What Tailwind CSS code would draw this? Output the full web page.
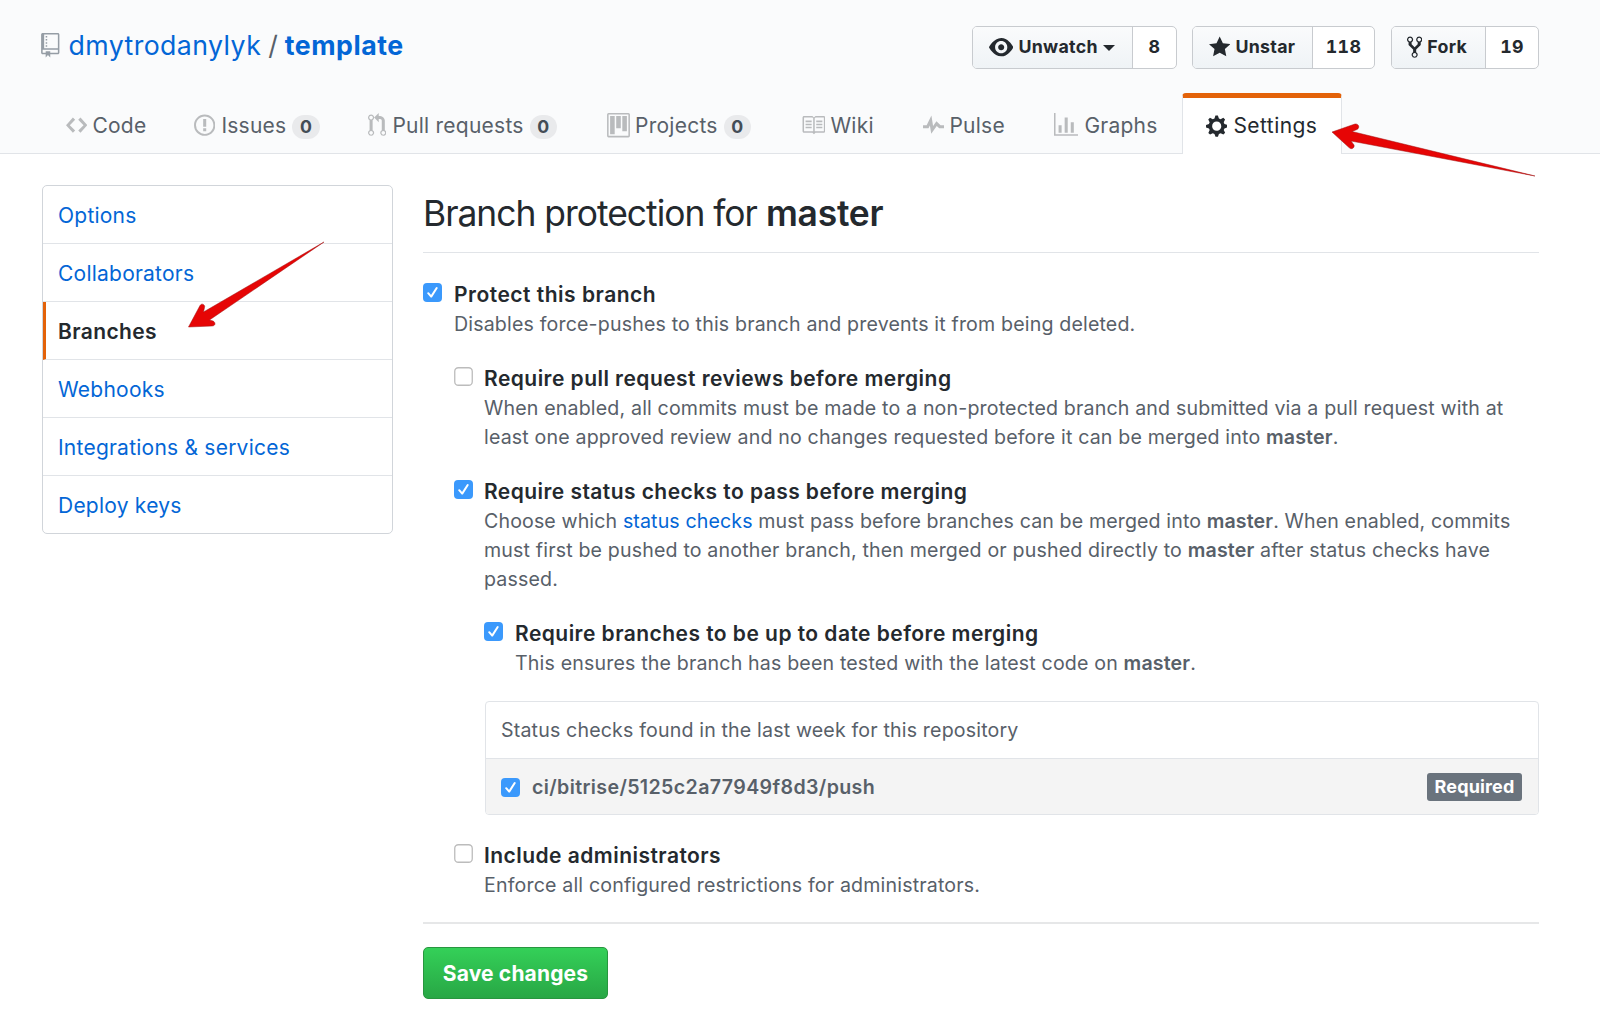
<!DOCTYPE html>
<html lang="en">
<head>
<meta charset="utf-8">
<title>Branch protection</title>
<script src="https://cdn.jsdelivr.net/npm/@tailwindcss/browser@4"></script>
</head>
<body class="relative h-[1029px] w-[1600px] overflow-hidden bg-white font-[Inter,sans-serif] text-[#24292e]">
<svg class="hidden">
  <symbol id="on" viewBox="0 0 19 19"><rect width="19" height="19" rx="4" fill="#3b99fc"/><path d="M5.2 10.2 8.2 13.6 13.7 5" fill="none" stroke="#fff" stroke-width="2" stroke-linecap="round" stroke-linejoin="round"/></symbol>
  <symbol id="off" viewBox="0 0 19 19"><rect x=".75" y=".75" width="17.5" height="17.5" rx="3.6" fill="#fff" stroke="#bcbcbc" stroke-width="1.3"/></symbol>
</svg>

<header class="flex h-[154px] flex-col border-b border-[#e1e4e8] bg-[#fafbfc]">
  <div class="flex h-[93px] shrink-0 items-start pr-[61px] pl-[41px]">
    <div class="mt-[25px] flex h-10 items-center text-[26.7px] leading-10 whitespace-nowrap text-[#0366d6]">
      <svg class="mt-px mr-[9px] h-[24.4px] w-[18.5px] fill-[#959da5]" viewBox="0 0 12 16"><path d="M4 9H3V8h1v1zm0-3H3v1h1V6zm0-2H3v1h1V4zm0-2H3v1h1V2zm8-1v12c0 .55-.45 1-1 1H6v2l-1.5-1.5L3 16v-2H1c-.55 0-1-.45-1-1V1c0-.55.45-1 1-1h10c.55 0 1 .45 1 1zm-1 10H1v2h2v-1h3v1h5v-2zm0-10H2v9h9V1z"/></svg>
      <span class="tracking-[0.42px]">dmytrodanylyk</span>
      <span class="mx-[7px] text-[#586069]">/</span>
      <span class="font-bold tracking-[0.5px]">template</span>
    </div>
    <div class="mt-[26px] ml-auto flex gap-4 text-[17.8px] font-bold tracking-[0.3px] tabular-nums">
      <div class="-mr-px flex h-[43px] w-[205px] overflow-hidden rounded-[5px] border border-[#c8cbcf] bg-white">
        <div class="flex w-[160px] items-center border-r border-[#c8cbcf] bg-linear-to-b from-[#fafbfc] to-[#eff3f6] pl-4">
          <svg class="mr-[5px] h-[24.4px] w-[24.4px] fill-[#24292e]" viewBox="0 0 16 16"><path d="M8.06 2C3 2 0 8 0 8s3 6 8.06 6C13 14 16 8 16 8s-3-6-7.94-6zM8 12c-2.2 0-4-1.78-4-4 0-2.2 1.8-4 4-4 2.22 0 4 1.8 4 4 0 2.22-1.78 4-4 4zm2-4c0 1.11-.89 2-2 2-1.11 0-2-.89-2-2 0-1.11.89-2 2-2 1.11 0 2 .89 2 2z"/></svg>
          <span>Unwatch</span>
          <span class="ml-[5px] border-x-[6px] border-t-[6px] border-x-transparent border-t-[#24292e]"></span>
        </div>
        <div class="flex flex-1 items-center justify-center">8</div>
      </div>
      <div class="flex h-[43px] w-[183px] overflow-hidden rounded-[5px] border border-[#c8cbcf] bg-white">
        <div class="flex w-[120px] items-center border-r border-[#c8cbcf] bg-linear-to-b from-[#fafbfc] to-[#eff3f6] pl-4">
          <svg class="mr-[5px] h-[24.4px] w-[21.4px] fill-[#24292e]" viewBox="0 0 14 16"><path d="M14 6l-4.9-.64L7 1 4.9 5.36 0 6l3.6 3.26L2.67 14 7 11.67 11.33 14l-.93-4.74z"/></svg>
          <span>Unstar</span>
        </div>
        <div class="flex flex-1 items-center justify-center">118</div>
      </div>
      <div class="flex h-[43px] w-[148px] overflow-hidden rounded-[5px] border border-[#c8cbcf] bg-white">
        <div class="flex w-[94px] items-center border-r border-[#c8cbcf] bg-linear-to-b from-[#fafbfc] to-[#eff3f6] pl-[15px]">
          <svg class="mr-[5px] h-[24.4px] w-[15.3px] fill-[#24292e]" viewBox="0 0 10 16"><path d="M8 1a1.993 1.993 0 0 0-1 3.72V6L5 8 3 6V4.72A1.993 1.993 0 0 0 2 1a1.993 1.993 0 0 0-1 3.72V6.5l3 3v1.78A1.993 1.993 0 0 0 5 15a1.993 1.993 0 0 0 1-3.72V9.5l3-3V4.72A1.993 1.993 0 0 0 8 1zM2 4.2C1.34 4.2.8 3.65.8 3c0-.65.55-1.2 1.2-1.2.65 0 1.2.55 1.2 1.2 0 .65-.55 1.2-1.2 1.2zm3 10c-.66 0-1.2-.55-1.2-1.2 0-.65.55-1.2 1.2-1.2.65 0 1.2.55 1.2 1.2 0 .65-.55 1.2-1.2 1.2zm3-10c-.66 0-1.2-.55-1.2-1.2 0-.65.55-1.2 1.2-1.2.65 0 1.2.55 1.2 1.2 0 .65-.55 1.2-1.2 1.2z"/></svg>
          <span>Fork</span>
        </div>
        <div class="flex flex-1 items-center justify-center">19</div>
      </div>
    </div>
  </div>

  <nav class="-mb-px flex h-[61px] shrink-0 pl-[66px] text-[21px] tracking-[0.25px] whitespace-nowrap text-[#586069]">
    <a class="flex w-[128px] items-center pt-1"><svg class="mr-[5px] h-[24.4px] w-[21.4px] fill-[#b9bbbd]" viewBox="0 0 14 16"><path d="M9.5 3L8 4.5 11.5 8 8 11.5 9.5 13 14 8 9.5 3zm-5 0L0 8l4.5 5L6 11.5 2.5 8 6 4.5 4.500 3z"/></svg><span>Code</span></a>
    <a class="flex w-[174px] items-center pt-1"><svg class="mr-[6px] h-[24.4px] w-[21.4px] fill-[#b9bbbd]" viewBox="0 0 14 16"><path d="M7 2.3c3.14 0 5.7 2.56 5.7 5.7s-2.56 5.7-5.7 5.7A5.71 5.71 0 0 1 1.3 8c0-3.14 2.56-5.7 5.7-5.7zM7 1C3.14 1 0 4.14 0 8s3.14 7 7 7 7-3.14 7-7-3.14-7-7-7zm1 3H6v5h2V4zm0 6H6v2h2v-2z"/></svg><span>Issues</span><span class="mt-[3px] ml-[6px] flex h-6 w-[27.5px] items-center justify-center rounded-full bg-[#e9eaec] text-[17.7px] font-bold text-[#444d56]">0</span></a>
    <a class="flex w-[239px] items-center pt-1"><svg class="mr-[6px] h-[24.4px] w-[18.4px] fill-[#b9bbbd]" viewBox="0 0 12 16"><path d="M11 11.28V5c-.03-.78-.34-1.47-.94-2.06C9.46 2.35 8.78 2.03 8 2H7V0L4 3l3 3V4h1c.27.02.48.11.69.31.21.2.3.42.31.69v6.28A1.993 1.993 0 0 0 10 15a1.993 1.993 0 0 0 1-3.72zm-1 2.92c-.66 0-1.2-.55-1.2-1.2 0-.65.55-1.2 1.2-1.2.65 0 1.2.55 1.2 1.2 0 .65-.55 1.2-1.2 1.2zM4 3c0-1.11-.89-2-2-2a1.993 1.993 0 0 0-1 3.72v6.56A1.993 1.993 0 0 0 2 15a1.993 1.993 0 0 0 1-3.72V4.72c.59-.34 1-.98 1-1.72zm-.8 10c0 .66-.55 1.2-1.2 1.2-.65 0-1.2-.55-1.2-1.2 0-.65.55-1.2 1.2-1.2.65 0 1.2.55 1.2 1.2zM2 4.2C1.34 4.2.8 3.65.8 3c0-.65.55-1.2 1.2-1.2.65 0 1.2.55 1.2 1.2 0 .65-.55 1.2-1.2 1.2z"/></svg><span>Pull requests</span><span class="mt-[3px] ml-[6px] flex h-6 w-[27.5px] items-center justify-center rounded-full bg-[#e9eaec] text-[17.7px] font-bold text-[#444d56]">0</span></a>
    <a class="flex w-[194px] items-center pt-1"><svg class="mr-[5px] h-[24.4px] w-[23px] fill-[#b9bbbd]" viewBox="0 0 15 16"><path fill-rule="evenodd" d="M10 12h3V2h-3v10zm-4-2h3V2H6v8zm-4 4h3V2H2v12zm-1 1h13V1H1v14zM14 0H1a1 1 0 0 0-1 1v14a1 1 0 0 0 1 1h13a1 1 0 0 0 1-1V1a1 1 0 0 0-1-1z"/></svg><span>Projects</span><span class="mt-[3px] ml-[6px] flex h-6 w-[27.5px] items-center justify-center rounded-full bg-[#e9eaec] text-[17.7px] font-bold text-[#444d56]">0</span></a>
    <a class="flex w-[122px] items-center pt-1"><svg class="mr-[5px] h-[24.4px] w-[24.4px] fill-[#b9bbbd]" viewBox="0 0 16 16"><path d="M3 5h4v1H3V5zm0 3h4V7H3v1zm0 2h4V9H3v1zm11-5h-4v1h4V5zm0 2h-4v1h4V7zm0 2h-4v1h4V9zm2-6v9c0 .55-.45 1-1 1H9.5l-1 1-1-1H2c-.55 0-1-.45-1-1V3c0-.55.45-1 1-1h5.5l1 1 1-1H15c.55 0 1 .45 1 1zm-8 .5L7.5 3H2v9h6V3.5zm7-.5H9.5l-.5.5V12h6V3z"/></svg><span>Wiki</span></a>
    <a class="flex w-[131px] items-center pt-1"><svg class="mr-[5px] h-[24.4px] w-[21.4px] fill-[#b9bbbd]" viewBox="0 0 14 16"><path d="M11.5 8L8.8 5.4 6.6 8.5 5.5 1.6 2.38 8H0v2h3.6l.9-1.8.9 5.4L9 8.5l1.6 1.5H14V8z"/></svg><span>Pulse</span></a>
    <a class="flex w-[128px] items-center pt-1"><svg class="mr-[6px] h-[24.4px] w-[24.4px] fill-[#b9bbbd]" viewBox="0 0 16 16"><path d="M16 14v1H0V0h1v14h15zM5 13H3V8h2v5zm4 0H7V3h2v10zm4 0h-2V6h2v7z"/></svg><span>Graphs</span></a>
    <a class="flex w-[160px] items-center rounded-t-[4px] border-x border-t-[5px] border-x-[#e1e4e8] border-t-[#e36209] bg-white pl-[23px] tracking-[0.45px] text-[#24292e]"><svg class="mr-[6px] h-[24.4px] w-[21.4px] fill-[#24292e]" viewBox="0 0 14 16"><path d="M14 8.77v-1.6l-1.94-.64-.45-1.09.88-1.84-1.13-1.13-1.81.91-1.09-.45-.69-1.92h-1.6l-.63 1.94-1.11.45-1.84-.88-1.13 1.13.91 1.81-.45 1.09L0 7.23v1.59l1.94.64.45 1.09-.88 1.84 1.13 1.13 1.81-.91 1.09.45.69 1.92h1.59l.63-1.94 1.11-.45 1.84.88 1.13-1.13-.92-1.81.47-1.09L14 8.75v.02zM7 11c-1.66 0-3-1.34-3-3s1.34-3 3-3 3 1.34 3 3-1.34 3-3 3z"/></svg><span>Settings</span></a>
  </nav>
</header>

<main class="flex items-start gap-[30px] pl-[42px] whitespace-nowrap">
  <aside class="mt-[31px] w-[351px] shrink-0 divide-y divide-[#e1e4e8] rounded-[5px] border border-[#d1d5da] text-[21px] tracking-[0.23px] text-[#0366d6]">
    <a class="flex h-[58px] items-center pt-[2px] pl-[15px]">Options</a>
    <a class="flex h-[58px] items-center pt-[2px] pl-[15px]">Collaborators</a>
    <a class="flex h-[58px] items-center border-l-3 border-l-[#e36209] pt-[2px] pl-3 font-semibold tracking-[0.38px] text-[#24292e]">Branches</a>
    <a class="flex h-[58px] items-center pt-[2px] pl-[15px]">Webhooks</a>
    <a class="flex h-[58px] items-center pt-[2px] pl-[15px]">Integrations &amp; services</a>
    <a class="flex h-[57px] items-center pt-[2px] pl-[15px]">Deploy keys</a>
  </aside>

  <section class="mt-[36px] w-[1116px] text-[19.6px] leading-[29px] tracking-[0.16px] text-[#586069]">
    <h1 class="border-b border-[#e1e4e8] pb-[14px] text-[35.4px] leading-[48px] tracking-[-1px] text-[#24292e]">Branch protection for <span class="font-semibold tracking-[-0.2px]">master</span></h1>

    <div class="mt-[27px] flex gap-3">
      <svg class="mt-[3px] size-[19px]"><use href="#on"/></svg>
      <div>
        <h2 class="mb-px text-[21px] font-semibold tracking-[0.5px] text-[#24292e]">Protect this branch</h2>
        <p>Disables force-pushes to this branch and prevents it from being deleted.</p>
      </div>
    </div>

    <div class="mt-[25px] flex gap-[11px] pl-[31px]">
      <svg class="mt-[3px] size-[19px]"><use href="#off"/></svg>
      <div>
        <h2 class="mb-px text-[21px] font-semibold tracking-[0.46px] text-[#24292e]">Require pull request reviews before merging</h2>
        <p>When enabled, all commits must be made to a non-protected branch and submitted via a pull request with at<br>least one approved review and no changes requested before it can be merged into <b class="font-semibold">master</b>.</p>
      </div>
    </div>

    <div class="mt-[25px] flex gap-[11px] pl-[31px]">
      <svg class="mt-[3px] size-[19px]"><use href="#on"/></svg>
      <div>
        <h2 class="mb-px text-[21px] font-semibold tracking-[0.44px] text-[#24292e]">Require status checks to pass before merging</h2>
        <p><span class="tracking-[0.12px]">Choose which <a class="text-[#0366d6]">status checks</a> must pass before branches can be merged into <b class="font-semibold">master</b>. When enabled, commits</span><br>must first be pushed to another branch, then merged or pushed directly to <b class="font-semibold">master</b> after status checks have<br>passed.</p>
      </div>
    </div>

    <div class="mt-[25px] flex gap-3 pl-[61px]">
      <svg class="mt-[3px] size-[19px]"><use href="#on"/></svg>
      <div>
        <h2 class="mb-px text-[21px] font-semibold tracking-[0.46px] text-[#24292e]">Require branches to be up to date before merging</h2>
        <p>This ensures the branch has been tested with the latest code on <b class="font-semibold">master</b>.</p>
      </div>
    </div>

    <div class="mt-[23px] ml-[62px] overflow-hidden rounded-[4px] border border-[#e1e4e8]">
      <div class="flex h-[57px] items-center border-b border-[#e1e4e8] pt-px pl-[15px]">Status checks found in the last week for this repository</div>
      <div class="flex h-[55px] items-center bg-[#f4f4f4] pt-px pr-4 pl-[15px]">
        <svg class="mr-3 size-[19px]"><use href="#on"/></svg>
        <span class="font-semibold tracking-[0.37px]">ci/bitrise/5125c2a77949f8d3/push</span>
        <span class="mb-px ml-auto flex h-[28px] w-[95px] items-center justify-center rounded-[3px] bg-[#6a737d] text-[18px] font-bold text-white">Required</span>
      </div>
    </div>

    <div class="mt-[26px] flex gap-[11px] border-b-2 border-[#e6e7e8] pb-[22px] pl-[31px]">
      <svg class="mt-[3px] size-[19px]"><use href="#off"/></svg>
      <div>
        <h2 class="mb-px text-[21px] font-semibold tracking-[0.46px] text-[#24292e]">Include administrators</h2>
        <p>Enforce all configured restrictions for administrators.</p>
      </div>
    </div>

    <button class="mt-[23px] flex h-[52px] w-[185px] items-center justify-center rounded-[5px] border border-[#28963f] bg-linear-to-b from-[#34d058] to-[#28a745] text-[21px] font-bold text-white">Save changes</button>
  </section>
</main>

<svg class="absolute top-0 left-0 h-[400px] w-[1600px]" viewBox="0 0 1600 400">
  <g fill="#e60505" stroke="#a01010" stroke-width=".5">
    <path d="M1332 132 1355 124C1359 123.500 1360 128 1357 129.500L1352 131.500 1535 176 1351 141 1354 145C1355 148 1351 150 1349 147.500Z"/>
    <path d="M188.500 327 200 305.500C202 302.500 205.500 305 204.500 307.500L203.500 312 324 242 209.500 320 213 321C216 322.500 215.500 326 212 326Z"/>
  </g>
</svg>
</body>
</html>
